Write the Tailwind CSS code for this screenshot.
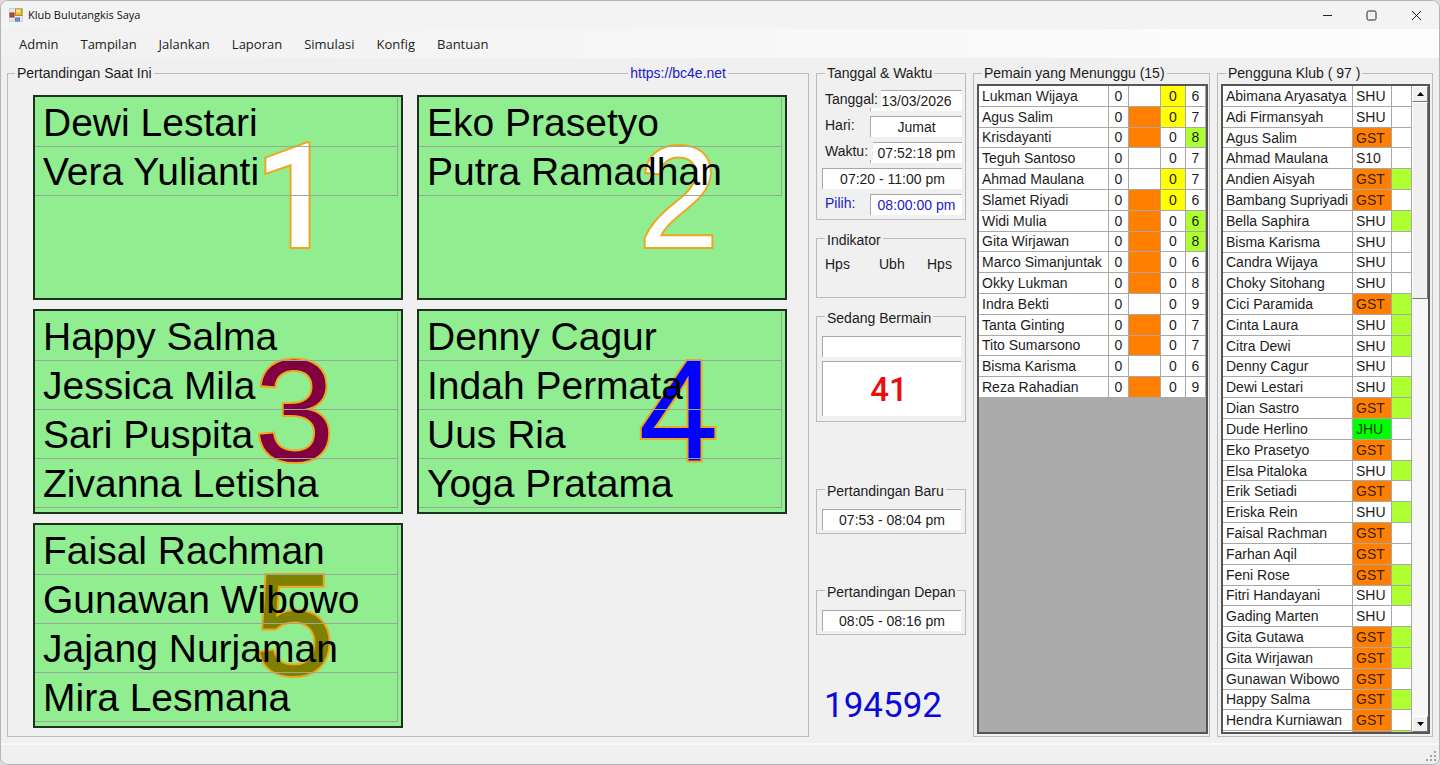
<!DOCTYPE html>
<html lang="id">
<head>
<meta charset="utf-8">
<meta name="viewport" content="width=device-width, initial-scale=1">
<title>Klub Bulutangkis Saya</title>
<script src="https://cdn.jsdelivr.net/npm/@tailwindcss/browser@4"></script>
</head>
<body class="h-screen overflow-hidden bg-[#dcdcdc] font-['Liberation_Sans',Arial,sans-serif] text-sm leading-[18px] text-[#1c1c1c]">
<div class="flex h-full flex-col overflow-hidden rounded-lg border border-[#b4b4b4] bg-[#f0f0f0]">

  <header class="flex h-7 shrink-0 items-center bg-[#f3f3f3] pl-2">
    <svg class="size-[14px]" viewBox="0 0 14 14" aria-hidden="true">
      <rect x=".5" y=".5" width="13" height="13" fill="#e4e8ee" stroke="#cdd2da"/>
      <rect x="6.500" y="1" width="6.500" height="6.500" fill="#eebd2b" stroke="#b98a1c"/>
      <rect x="7" y="1.500" width="4.500" height="3" fill="#fbe48a"/>
      <rect x="1" y="5" width="4" height="4" fill="#c4453f" stroke="#8e3532"/>
      <rect x="6.500" y="10" width="4" height="3" fill="#6b9be6" stroke="#4f79c0"/>
    </svg>
    <h1 class="ml-[5px] font-['Open_Sans',sans-serif] text-[11px] text-[#111]">Klub Bulutangkis Saya</h1>
    <div class="ml-auto flex">
      <button type="button" aria-label="Minimalkan" class="flex h-7 w-11 items-center justify-center"><svg class="size-[11px]" viewBox="0 0 11 11" stroke="#222" fill="none"><path d="M1 5.500h9"/></svg></button>
      <button type="button" aria-label="Maksimalkan" class="flex h-7 w-11 items-center justify-center"><svg class="size-[11px]" viewBox="0 0 11 11" stroke="#222" fill="none"><rect x="1" y="1" width="9" height="9" rx="1.500"/></svg></button>
      <button type="button" aria-label="Tutup" class="flex h-7 w-[46px] items-center justify-center"><svg class="size-[11px]" viewBox="0 0 11 11" stroke="#222" fill="none"><path d="M1 1l9 9M10 1l-9 9"/></svg></button>
    </div>
  </header>

  <nav aria-label="Menu utama" class="flex h-[29px] shrink-0 items-center gap-[22px] bg-linear-to-r from-[#f1f1f1] to-[#fdfdfd] pl-[18px] font-['Open_Sans',sans-serif] text-[13px] text-[#222]">
    <button type="button">Admin</button>
    <button type="button">Tampilan</button>
    <button type="button">Jalankan</button>
    <button type="button">Laporan</button>
    <button type="button">Simulasi</button>
    <button type="button">Konfig</button>
    <button type="button">Bantuan</button>
  </nav>

  <main class="flex min-h-0 flex-1 gap-[7px] px-[6px] pt-[6px] pb-[6px]">

    <fieldset class="relative min-w-0 flex-1 border border-[#bcbcbc] pt-[13px] pr-[21px] pl-[25px]">
      <legend class="ml-[-18px] px-[2px]">Pertandingan Saat Ini</legend>
      <a href="https://bc4e.net" class="absolute -top-[18px] right-[80px] bg-[#f0f0f0] px-[2px] text-[#2020c8]">https://bc4e.net</a>
      <div id="courts" class="grid grid-cols-2 gap-x-[14px] gap-y-[9px]"></div>
    </fieldset>

    <aside class="flex w-[150px] shrink-0 flex-col">
      <fieldset class="h-[156px] border border-[#bcbcbc] pt-2 pr-[3px] pl-[5px]">
        <legend class="ml-[3px] px-[2px]">Tanggal &amp; Waktu</legend>
        <div class="flex flex-col gap-[5px]">
          <div class="relative flex h-[21px] justify-end">
            <label for="tanggal" class="absolute left-[3px] w-[56px] bg-[#f0f0f0]">Tanggal:</label>
            <output id="tanggal" class="w-[92px] border-t border-l border-[#a8a8a8] bg-white pt-px text-center">13/03/2026</output>
          </div>
          <div class="relative flex h-[21px] justify-end">
            <label for="hari" class="absolute left-[3px]">Hari:</label>
            <output id="hari" class="w-[92px] border-t border-l border-[#a8a8a8] bg-white pt-px text-center">Jumat</output>
          </div>
          <div class="relative flex h-[21px] justify-end">
            <label for="waktu" class="absolute left-[3px] w-[48px] bg-[#f0f0f0]">Waktu:</label>
            <output id="waktu" class="w-[92px] border-t border-l border-[#a8a8a8] bg-white pt-px text-center">07:52:18 pm</output>
          </div>
          <output aria-label="Jam sesi" class="block h-[21px] border-t border-l border-[#a8a8a8] bg-white pt-px text-center">07:20 - 11:00 pm</output>
          <div class="relative flex h-[21px] justify-end text-[#2020c8]">
            <label for="pilih" class="absolute left-[3px]">Pilih:</label>
            <output id="pilih" class="w-[92px] border-t border-l border-[#a8a8a8] bg-white pt-px text-center">08:00:00 pm</output>
          </div>
        </div>
      </fieldset>

      <fieldset class="mt-[7px] h-[71px] border border-[#bcbcbc] pt-[6px] pr-3 pl-2">
        <legend class="px-[2px] pt-1">Indikator</legend>
        <div class="flex">
          <span class="w-[54px]">Hps</span><span class="w-12">Ubh</span><span>Hps</span>
        </div>
      </fieldset>

      <fieldset class="mt-[7px] h-[117px] border border-[#bcbcbc] pt-[9px] pr-1 pl-[5px]">
        <legend class="ml-[3px] px-[2px] pt-1">Sedang Bermain</legend>
        <output aria-label="Nama pemain" class="block h-[21px] border-t border-l border-[#a8a8a8] bg-white"></output>
        <output aria-label="Jumlah bermain" class="mt-1 flex h-[55px] items-center justify-center border-t border-l border-[#a8a8a8] bg-white pr-[6px] font-['Roboto',sans-serif] text-[33px] leading-none font-medium text-[#ee0c0c]">41</output>
      </fieldset>

      <fieldset class="mt-[56px] h-[56px] border border-[#bcbcbc] pt-[9px] pr-1 pl-[5px]">
        <legend class="ml-[3px] px-[2px] pt-1">Pertandingan Baru</legend>
        <output class="block h-[21px] border-t border-l border-[#a8a8a8] bg-white pt-px text-center">07:53 - 08:04 pm</output>
      </fieldset>

      <fieldset class="mt-[45px] h-[56px] border border-[#bcbcbc] pt-[9px] pr-1 pl-[5px]">
        <legend class="ml-[3px] px-[2px] pt-1">Pertandingan Depan</legend>
        <output class="block h-[21px] border-t border-l border-[#a8a8a8] bg-white pt-px text-center">08:05 - 08:16 pm</output>
      </fieldset>

      <output aria-label="Penghitung" class="mt-[53px] ml-2 block font-['Roboto',sans-serif] text-[35px] leading-[36px] text-[#0a0ad8]">194592</output>
    </aside>

    <fieldset class="flex w-[237px] shrink-0 flex-col border border-[#bcbcbc] pt-[2px] pr-px pb-[2px] pl-[3px]">
      <legend class="ml-[5px] px-[2px]">Pemain yang Menunggu (15)</legend>
      <div class="h-full overflow-hidden border-2 border-[#555] bg-[#ababab]">
        <table class="h-[312px] w-full table-fixed border-separate border-spacing-0 bg-white">
          <colgroup><col class="w-[130px]"><col class="w-5"><col class="w-8"><col class="w-[25px]"><col></colgroup>
          <tbody id="waiting"></tbody>
        </table>
      </div>
    </fieldset>

    <fieldset class="flex w-[216px] shrink-0 flex-col border border-[#bcbcbc] pt-[2px] pr-[2px] pb-[2px] pl-[3px]">
      <legend class="ml-[5px] px-[2px]">Pengguna Klub ( 97 )</legend>
      <div class="flex h-full overflow-hidden border-2 border-[#555] bg-[#f7f7f7]">
        <div class="min-w-0 flex-1 overflow-hidden">
          <table class="h-[666px] w-full table-fixed border-separate border-spacing-0 bg-white">
            <colgroup><col><col class="w-[39px]"><col class="w-5"></colgroup>
            <tbody id="members"></tbody>
          </table>
        </div>
        <div class="flex w-4 shrink-0 flex-col">
          <button type="button" aria-label="Gulir ke atas" class="flex h-4 shrink-0 items-center justify-center border border-t-white border-r-[#777] border-b-[#777] border-l-white bg-[#f0f0f0]"><svg class="h-1 w-[7px]" viewBox="0 0 7 4"><path d="M0 4h7L3.500 0z"/></svg></button>
          <div class="h-[197px] border border-t-white border-r-[#777] border-b-[#777] border-l-white bg-[#f0f0f0]"></div>
          <button type="button" aria-label="Gulir ke bawah" class="mt-auto flex h-4 shrink-0 items-center justify-center border border-t-white border-r-[#777] border-b-[#777] border-l-white bg-[#f0f0f0]"><svg class="h-1 w-[7px]" viewBox="0 0 7 4"><path d="M0 0h7L3.500 4z"/></svg></button>
        </div>
      </div>
    </fieldset>
  </main>

  <footer class="flex h-[21px] shrink-0 items-end justify-end border-t-2 border-[#f9f9f9] bg-[#f0f0f0] pr-[2px] pb-[2px]">
    <svg class="size-[11px]" viewBox="0 0 11 11" fill="#a2a2a2" aria-hidden="true"><path d="M8 0h2v2H8zM4 4h2v2H4zM8 4h2v2H8zM0 8h2v2H0zM4 8h2v2H4zM8 8h2v2H8z"/></svg>
  </footer>
</div>

<script>
const courts = [
  ["1", "font-['Roboto',sans-serif] font-medium text-white", ["Dewi Lestari", "Vera Yulianti"]],
  ["2", "text-white", ["Eko Prasetyo", "Putra Ramadhan"]],
  ["3", "text-[#800040]", ["Happy Salma", "Jessica Mila", "Sari Puspita", "Zivanna Letisha"]],
  ["4", "text-[#0000ff]", ["Denny Cagur", "Indah Permata", "Uus Ria", "Yoga Pratama"]],
  ["5", "text-[#808000]", ["Faisal Rachman", "Gunawan Wibowo", "Jajang Nurjaman", "Mira Lesmana"]],
];
document.getElementById("courts").innerHTML = courts.map(([no, tone, names]) => `
  <section aria-label="Lapangan ${no}" class="relative h-[205px] border-2 border-[#1d331d] bg-[#90ee90] pt-px pr-[3px]">
    <span class="absolute top-[29px] left-[60%] text-[144px] leading-[144px] [-webkit-text-stroke:4px_#efa51c] [paint-order:stroke_fill] ${tone}">${no}</span>
    <ul class="relative border-r border-[#98a998] text-[39px] text-black">
      ${names.map(n => `<li class="h-[49px] border-b border-[#98a998] pl-2 leading-[50px] whitespace-nowrap">${n}</li>`).join("")}
    </ul>
  </section>`).join("");

// name, orange flag, yellow flag, score
const waiting = [
  ["Lukman Wijaya", 0, 1, 6], ["Agus Salim", 1, 1, 7], ["Krisdayanti", 1, 0, 8], ["Teguh Santoso", 0, 0, 7],
  ["Ahmad Maulana", 0, 1, 7], ["Slamet Riyadi", 1, 1, 6], ["Widi Mulia", 1, 0, 6], ["Gita Wirjawan", 1, 0, 8],
  ["Marco Simanjuntak", 1, 0, 6], ["Okky Lukman", 1, 0, 8], ["Indra Bekti", 0, 0, 9], ["Tanta Ginting", 1, 0, 7],
  ["Tito Sumarsono", 1, 0, 7], ["Bisma Karisma", 0, 0, 6], ["Reza Rahadian", 1, 0, 9],
];
const green = new Set(["Krisdayanti", "Widi Mulia", "Gita Wirjawan"]);
const cell = "border-r border-b border-[#a8a8a8] p-0 leading-[18px]";
document.getElementById("waiting").innerHTML = waiting.map(([name, orange, yellow, score]) => `
  <tr>
    <td class="${cell} pl-[3px] whitespace-nowrap">${name}</td>
    <td class="${cell} text-center">0</td>
    <td class="${cell} ${orange ? "bg-[#ff8000]" : ""}"></td>
    <td class="${cell} text-center ${yellow ? "bg-[#ffff00]" : ""}">0</td>
    <td class="${cell} text-center ${green.has(name) ? "bg-[#adff2f]" : ""}">${score}</td>
  </tr>`).join("");

const members = [
  ["Abimana Aryasatya", "SHU", 0], ["Adi Firmansyah", "SHU", 0], ["Agus Salim", "GST", 0], ["Ahmad Maulana", "S10", 0],
  ["Andien Aisyah", "GST", 1], ["Bambang Supriyadi", "GST", 0], ["Bella Saphira", "SHU", 1], ["Bisma Karisma", "SHU", 0],
  ["Candra Wijaya", "SHU", 0], ["Choky Sitohang", "SHU", 0], ["Cici Paramida", "GST", 1], ["Cinta Laura", "SHU", 1],
  ["Citra Dewi", "SHU", 1], ["Denny Cagur", "SHU", 0], ["Dewi Lestari", "SHU", 1], ["Dian Sastro", "GST", 1],
  ["Dude Herlino", "JHU", 0], ["Eko Prasetyo", "GST", 0], ["Elsa Pitaloka", "SHU", 1], ["Erik Setiadi", "GST", 0],
  ["Eriska Rein", "SHU", 1], ["Faisal Rachman", "GST", 0], ["Farhan Aqil", "GST", 0], ["Feni Rose", "GST", 1],
  ["Fitri Handayani", "SHU", 1], ["Gading Marten", "SHU", 0], ["Gita Gutawa", "GST", 1], ["Gita Wirjawan", "GST", 1],
  ["Gunawan Wibowo", "GST", 0], ["Happy Salma", "GST", 1], ["Hendra Kurniawan", "GST", 0], ["&nbsp;", "", 1, "GST"],
];
const tones = { GST: "bg-[#ff8000] text-[#40200a]", JHU: "bg-[#00ff00] text-[#0a400a]" };
document.getElementById("members").innerHTML = members.map(([name, code, active, tone]) => `
  <tr>
    <td class="${cell} pl-[3px] whitespace-nowrap">${name}</td>
    <td class="${cell} pl-[3px] ${tones[tone || code] || ""}">${code}</td>
    <td class="${cell} ${active ? "bg-[#adff2f]" : ""}"></td>
  </tr>`).join("");
</script>
</body>
</html>
